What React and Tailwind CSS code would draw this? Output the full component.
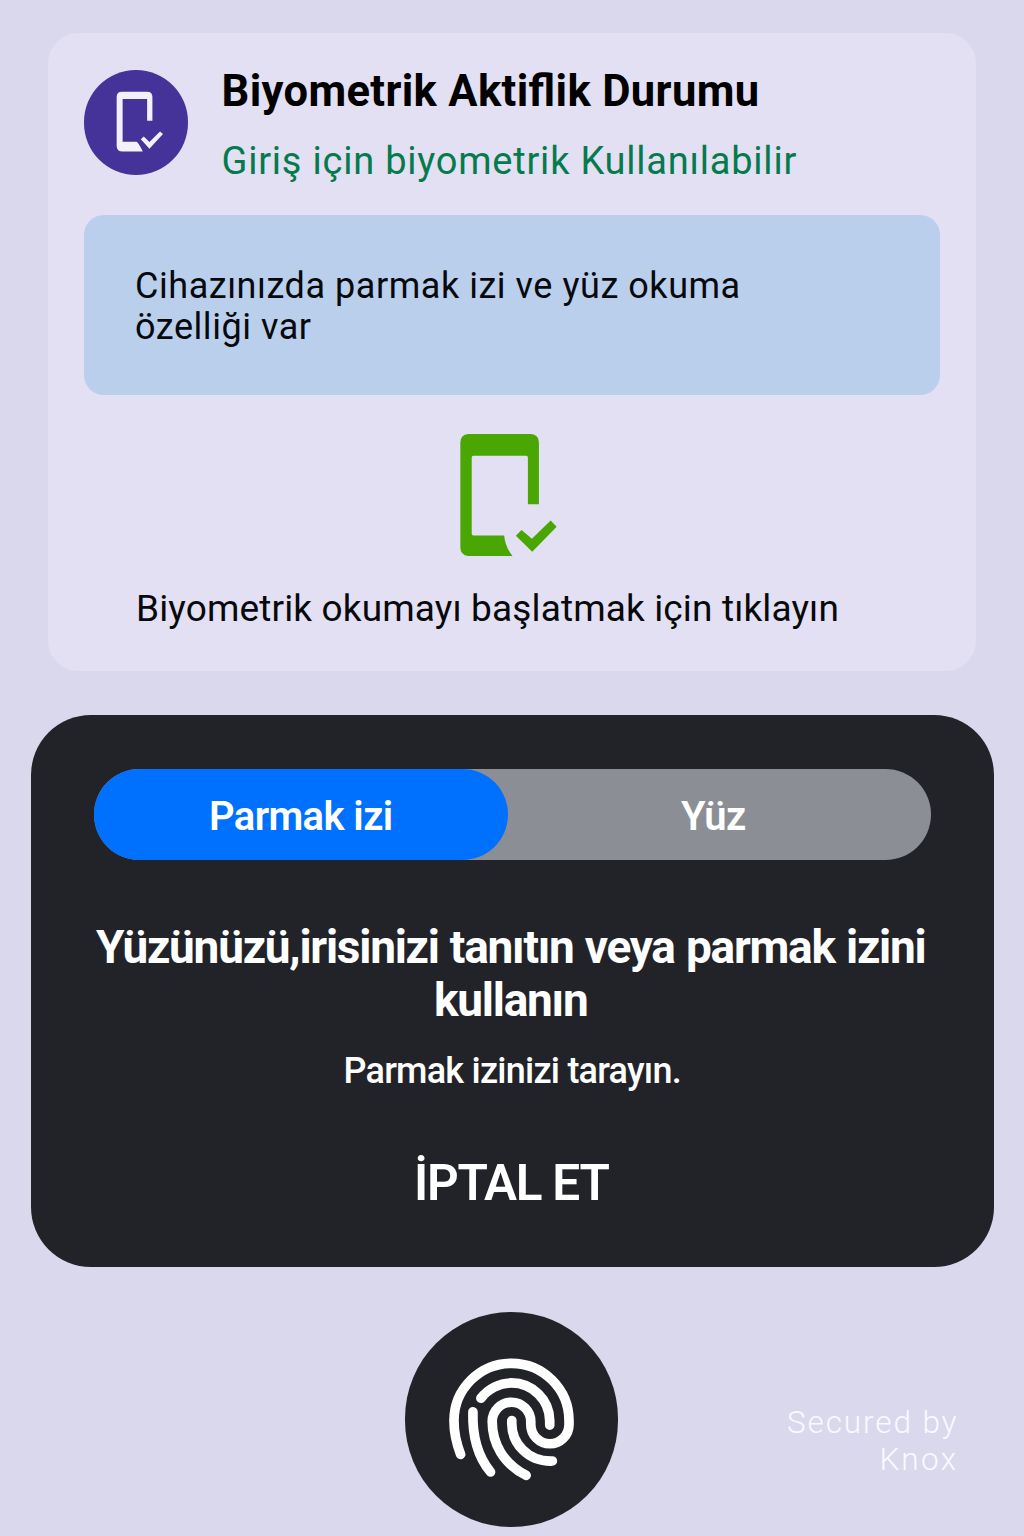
function PhoneCheckSmall() {
  return (
    <svg viewBox="137 90 142 184" className="mb-[2px] ml-[6px] h-[61px] w-[47px]" fill="#f4f0fc" aria-hidden="true">
      <path d="M155 92 H231 Q247 92 247 108 V180 H231 V114 H157 V243 H199 Q206 247 218 273 H157 Q139 273 139 255 V108 Q139 92 155 92Z" />
      <path d="M212 236 L221 227 L238 244 L270 212 L279 220 L238 264Z" />
    </svg>
  );
}

function PhoneCheckLarge() {
  return (
    <svg viewBox="61 42 290 364" className="h-[122px] w-[97px]" fill="#4aa602" aria-hidden="true">
      <path d="M86 42 H273 Q297 44 297 68 V252 H264 V112 Q264 107 259 107 H101 Q96 107 96 112 V340 Q96 345 101 345 H193 Q196 379 218 406 H86 Q62 404 62 380 V68 Q62 44 86 42Z" />
      <path d="M228 346 L245 329 L276 355 L332 300 L350 319 L277 394Z" />
    </svg>
  );
}

function Fingerprint() {
  return (
    <svg
      viewBox="162 174 376 368"
      className="h-[123px] w-[125px]"
      fill="none"
      stroke="#ffffff"
      strokeWidth="29"
      strokeLinecap="round"
      aria-hidden="true"
    >
      <path d="M197 463 Q177 412 177 362 A173 173 0 0 1 523 362 V373 A57.500 58 0 0 1 408 373 V364 A58 58 0 0 0 292 364 C292 430 325 490 394 526" />
      <path d="M258 294 C280 265 315 248 350 248 A115 115 0 0 1 465 362 V375" />
      <path d="M234 335 C232 400 245 465 287 516" />
      <path d="M351 361 C347 430 400 485 473 483" />
    </svg>
  );
}

export default function App() {
  return (
    <main className="flex h-[1536px] w-[1024px] flex-col overflow-hidden bg-[#dad8ec] pt-[33px] font-['Roboto',sans-serif]">
      <section className="mx-12 flex h-[638px] shrink-0 flex-col rounded-[30px] bg-[#e2e0f2] px-9 pt-[37px]">
        <header className="flex h-[144.5px]">
          <div className="flex h-[105px] w-[104px] shrink-0 items-center justify-center rounded-full bg-[#45339a]">
            <PhoneCheckSmall />
          </div>
          <div className="ml-[33.5px] whitespace-nowrap">
            <h1 className="text-[43.5px] leading-[44px] font-bold tracking-[0.37px] text-black [font-feature-settings:'liga']">
              Biyometrik Aktiflik Durumu
            </h1>
            <p className="mt-[25px] text-[38px] leading-[44px] tracking-[0.78px] text-[#057a4d]">
              Giriş için biyometrik Kullanılabilir
            </p>
          </div>
        </header>
        <div className="flex h-[180px] items-center rounded-[20px] bg-[#b9cfec] pl-[51px]">
          <p className="mt-[5px] text-[36px] leading-[41px] tracking-[0.54px] whitespace-nowrap text-[#08090c]">
            Cihazınızda parmak izi ve yüz okuma
            <br />
            özelliği var
          </p>
        </div>
        <button className="mt-[39.5px] flex flex-col items-start">
          <span className="ml-[376px]">
            <PhoneCheckLarge />
          </span>
          <span className="mt-[31px] ml-[52px] text-[37px] leading-[44px] tracking-[0.14px] whitespace-nowrap text-[#08090c]">
            Biyometrik okumayı başlatmak için tıklayın
          </span>
        </button>
      </section>

      <section className="mt-[44.4px] mr-[30px] ml-[30.5px] flex h-[552px] shrink-0 flex-col items-center rounded-[60px] bg-[#222328] pt-[54px] text-white">
        <div className="flex h-[91px] w-[837px] rounded-full bg-[#8b8e95] text-[40px] font-semibold tracking-[-0.6px]">
          <button className="flex w-[414px] items-center justify-center rounded-full bg-[#0070ff] pt-[4.5px]">Parmak izi</button>
          <button className="flex w-[411px] items-center justify-center pt-[4.5px]">Yüz</button>
        </div>
        <h2 className="mt-[61px] mr-[3px] text-center text-[46px] leading-[53px] font-bold tracking-[-1.25px] whitespace-nowrap [word-spacing:1px]">
          Yüzünüzü,irisinizi tanıtın veya parmak izini
          <br />
          kullanın
        </h2>
        <p className="mt-[22px] text-[36px] leading-[44px] font-medium tracking-[-0.76px] whitespace-nowrap">Parmak izinizi tarayın.</p>
        <button className="mt-[62px] mr-[2px] text-[49.5px] leading-[56px] font-semibold tracking-[-1.3px] whitespace-nowrap">İPTAL ET</button>
      </section>

      <footer className="mt-[44.6px] flex shrink-0">
        <button className="ml-[405px] flex h-[215px] w-[213px] items-center justify-center rounded-full bg-[#222328]">
          <Fingerprint />
        </button>
        <p className="mt-[92.500px] mr-[65.5px] ml-auto text-right text-[31.5px] leading-[37px] font-light tracking-[1.9px] text-[#faf9ff]">
          Secured by
          <br />
          <span className="tracking-[2.4px]">Knox</span>
        </p>
      </footer>
    </main>
  );
}
